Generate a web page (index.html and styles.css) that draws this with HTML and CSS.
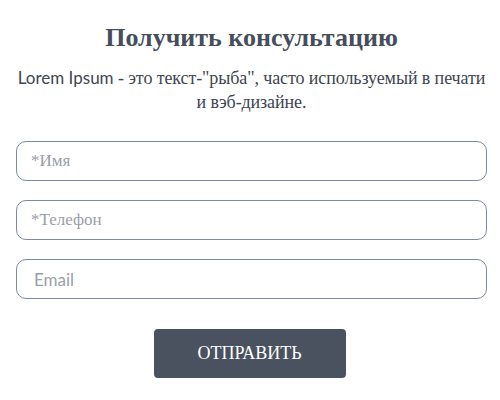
FILE: index.html
```html
<!DOCTYPE html>
<html lang="ru">
<head>
<meta charset="utf-8">
<link rel="stylesheet" href="styles.css">
</head>
<body>
<form class="form">
  <h1 class="title">Получить консультацию</h1>
  <p class="lead">Lorem Ipsum <span class="cyr">- это текст-"рыба", часто используемый в печати и вэб-дизайне.</span></p>
  <div class="fields">
    <input class="field field-cyr" type="text" placeholder="*Имя">
    <input class="field field-cyr" type="text" placeholder="*Телефон">
    <input class="field" type="text" placeholder="Email">
  </div>
  <button class="submit" type="button">ОТПРАВИТЬ</button>
</form>
</body>
</html>
```
FILE: styles.css
```css
html, body { margin: 0; padding: 0; background: #fff; }
body { font-family: Lato, sans-serif; }
.form {
  display: flex;
  flex-direction: column;
  align-items: center;
  padding: 22px 13px 0 16px;
}
.title {
  margin: 0;
  font-family: "Liberation Serif", serif;
  font-size: 26px;
  line-height: 32px;
  font-weight: bold;
  color: #464e5b;
  text-align: center;
}
.lead {
  align-self: stretch;
  margin: 12px -3px 0;
  font-size: 17px;
  line-height: 24px;
  color: #3e4651;
  text-align: center;
}
.cyr { font-family: "Liberation Serif", serif; font-size: 18px; letter-spacing: -0.1px; }
.fields {
  align-self: stretch;
  display: flex;
  flex-direction: column;
  gap: 19px;
  margin-top: 27px;
}
.field {
  box-sizing: border-box;
  height: 40px;
  width: 100%;
  border: 1px solid #7e8aa0;
  border-radius: 10px;
  padding: 0 17px;
  font-family: Lato, sans-serif;
  font-size: 17px;
  color: #333;
  outline: none;
}
.field-cyr { font-family: "Liberation Serif", serif; font-size: 17px; padding-left: 14px; }
.field::placeholder { color: #9aa0a8; }
.submit {
  margin: 30px 4px 0 0;
  width: 192px;
  height: 49px;
  border: none;
  border-radius: 4px;
  background: #4a5260;
  color: #fff;
  font-family: "Liberation Serif", serif;
  font-size: 18px;
}
```
